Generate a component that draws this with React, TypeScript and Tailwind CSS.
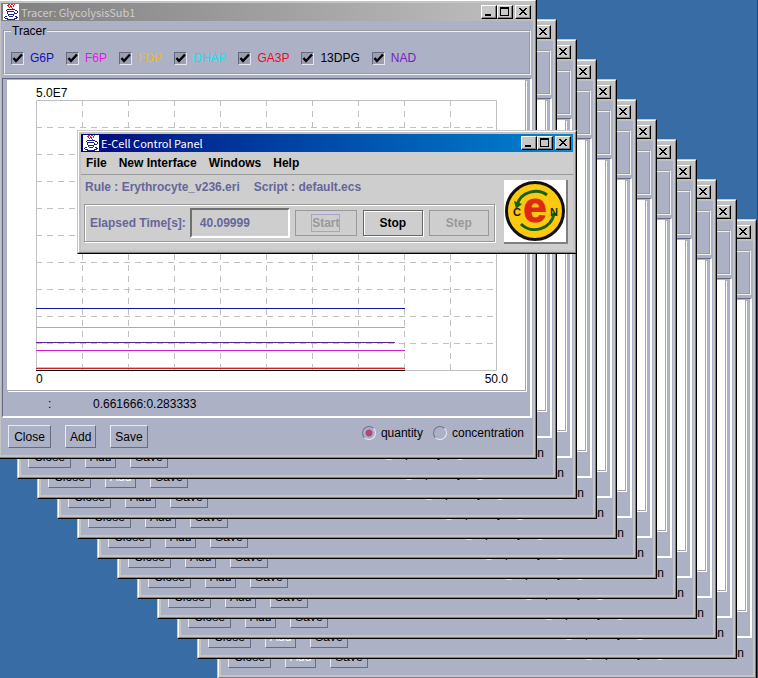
import React from "react";

type Species = { name: string; color: string };

const species: Species[] = [
  { name: "G6P", color: "text-[#1010c0]" },
  { name: "F6P", color: "text-[#f010f0]" },
  { name: "FDP", color: "text-[#f0b818]" },
  { name: "DHAP", color: "text-[#10e4f0]" },
  { name: "GA3P", color: "text-[#e81020]" },
  { name: "13DPG", color: "text-black" },
  { name: "NAD", color: "text-[#7820c0]" },
];

const traces = [
  { y: 208, end: 369, color: "#1414a0" },
  { y: 227, end: 369, color: "#30e0e0" },
  { y: 242, end: 359, color: "#602090" },
  { y: 250, end: 369, color: "#d020d0" },
  { y: 267, end: 369, color: "#ffc800" },
  { y: 268, end: 369, color: "#d02020" },
  { y: 270, end: 369, color: "#000000" },
];

const steps = [1, 2, 3, 4, 5, 6, 7, 8, 9];

function JavaIcon() {
  return (
    <svg className="h-4 w-4 shrink-0 bg-white" viewBox="0 0 16 16" fill="none" shapeRendering="crispEdges" aria-hidden="true">
      <path d="M5 0.5h2M8 0.5h2M11 0.5h1M4 1.5h2M7 1.5h1M10 1.5h1M5 2.5h1M7 2.5h2M10 2.5h1M6 3.5h1M8 3.5h1M9 4.5h1" stroke="#d02030" />
      <path d="M4 5.5h8M3 6.5h1M12 6.5h2M4 7.5h7M14 7.5h1M4 8.5h1M11 8.5h1M14 8.5h1M4 9.5h1M11 9.5h3M5 10.5h6M5 11.5h1M10 11.5h1M2 12.5h2M6 12.5h4M12 12.5h2M1 13.5h1M13 13.5h2M2 14.5h3M11 14.5h3M4 15.5h8" stroke="#202080" />
    </svg>
  );
}

const captionButton =
  "flex h-[14px] w-4 items-center justify-center border border-t-white border-l-white border-r-black border-b-black bg-[#c8c8c8] shadow-[inset_-1px_-1px_0_#808080]";

function TitleBar({ title, active }: { title: string; active?: boolean }) {
  return (
    <div
      className={
        active
          ? "flex h-[18px] items-center bg-linear-to-r from-[#000080] to-[#1084d0] px-[2px] font-normal text-white"
          : "flex h-[18px] items-center bg-linear-to-r from-[#808080] to-[#c0c0c0] px-[2px] font-normal text-[#cccccc]"
      }
    >
      <JavaIcon />
      <span className="ml-[2px] flex-1 font-['Noto_Sans_CJK_JP',sans-serif] text-[11px] leading-[14px] whitespace-nowrap">{title}</span>
      <button className={captionButton} aria-label="Minimize">
        <svg width="12" height="10" shapeRendering="crispEdges"><path d="M2 8h6" stroke="#000" strokeWidth="2" /></svg>
      </button>
      <button className={captionButton} aria-label="Maximize">
        <svg width="12" height="10" shapeRendering="crispEdges"><path d="M1 0h9v9h-9zM2 2v6h7v-6z" fill="#000" fillRule="evenodd" /></svg>
      </button>
      <button className={captionButton + " ml-[2px]"} aria-label="Close window">
        <svg width="12" height="10" shapeRendering="crispEdges">
          <path d="M2 1h2v1h1v1h2v-1h1v-1h2v1h-1v1h-1v1h-1v1h1v1h1v1h1v1h-2v-1h-1v-1h-2v1h-1v1h-2v-1h1v-1h1v-1h1v-1h-1v-1h-1v-1h-1z" fill="#000" />
        </svg>
      </button>
    </div>
  );
}

function Frame({ children, className }: { children: React.ReactNode; className: string }) {
  return (
    <div className="border border-t-[#c8c8c8] border-l-[#c8c8c8] border-r-black border-b-black">
      <div className={"border border-t-white border-l-white border-r-[#808080] border-b-[#808080] bg-[#c4c4c4] p-[2px] " + className}>
        {children}
      </div>
    </div>
  );
}

function SpeciesToggle({ name, color }: Species) {
  return (
    <label className={"flex items-center gap-[6px] " + color}>
      <span className="grid">
        <input
          type="checkbox"
          defaultChecked
          className="col-start-1 row-start-1 h-[13px] w-[13px] appearance-none border border-t-[#666a80] border-l-[#666a80] border-r-[#e4e6f0] border-b-[#e4e6f0] bg-[#9c9fb2]"
        />
        <svg className="pointer-events-none col-start-1 row-start-1" width="13" height="13" viewBox="0 0 13 13" fill="none" aria-hidden="true">
          <path d="M2.5 6L5 9L11 2.5" stroke="#000" strokeWidth="2.4" />
        </svg>
      </span>
      {name}
    </label>
  );
}

function Chart() {
  return (
    <div className="border-r border-b border-[#a8a8a8] bg-white pt-[6px] pr-7 pb-1 pl-[29px] shadow-[1px_1px_0_#fff]">
      <div className="leading-[14px]">5.0E7</div>
      <svg className="block w-full" height="271" viewBox="0 0 461 271" preserveAspectRatio="none" fill="none">
        <g stroke="#c0c0c0">
          <path d="M0.5 0.5H460.5V270.5H0.5Z" />
          {steps.map((n) => (
            <path key={"v" + n} d={`M${n * 46 + 0.5} 0V270`} strokeDasharray="6 5" />
          ))}
          {steps.map((n) => (
            <path key={"h" + n} d={`M0 ${n * 27 + 0.5}H460`} strokeDasharray="6 5" />
          ))}
        </g>
        {traces.map((t) => (
          <rect key={t.y} x="0" y={t.y} width={t.end} height="1" fill={t.color} />
        ))}
      </svg>
      <div className="-mr-[11px] flex justify-between pt-px leading-[14px]">
        <span>0</span>
        <span>50.0</span>
      </div>
    </div>
  );
}

const lavenderButton =
  "h-[23px] border border-t-[#e8eaf4] border-l-[#e8eaf4] border-r-[#686c80] border-b-[#686c80] px-1";

const radioInput =
  "h-[14px] w-[14px] appearance-none rounded-full border border-t-[#707488] border-l-[#707488] border-r-[#e8eaf4] border-b-[#e8eaf4] checked:bg-[radial-gradient(circle,#b04878_3px,transparent_4px)]";

function TracerWindow({ id, addPressed }: { id: number; addPressed: boolean }) {
  return (
    <Frame className="">
      <TitleBar title="Tracer: GlycolysisSub1" />
      <div className="bg-[#adb1c6] px-px pt-[3px]">
        <fieldset className="mx-px border-2 border-[#f0f0f0] px-[6px] pb-2 [border-style:groove]">
          <legend className="px-px leading-[14px]">Tracer</legend>
          <div className="flex gap-3 pt-[13px] leading-[14px]">
            {species.map((s) => (
              <SpeciesToggle key={s.name} {...s} />
            ))}
          </div>
        </fieldset>
        <div className="mt-[3px] border-t border-r-2 border-b-2 border-l border-t-[#666a84] border-r-white border-b-white border-l-[#666a84] pt-px pr-1 pl-1">
          <Chart />
          <div className="flex h-[25px] items-center pl-[41px]">
            <span className="w-[45px]">:</span>
            <span>0.661666:0.283333</span>
          </div>
        </div>
        <div className="flex h-[37px] items-start pt-[7px] pr-2 pl-[6px]">
          <button className={lavenderButton + " w-[43px]"}>Close</button>
          <button className={lavenderButton + " ml-[14px] w-[31px]" + (addPressed ? " text-white" : "")}>Add</button>
          <button className={lavenderButton + " ml-[14px] w-[38px]"}>Save</button>
          <div className="ml-auto flex gap-[10px] pt-px leading-[14px]">
            <label className="flex items-center gap-[5px]">
              <input type="radio" name={"unit" + id} defaultChecked className={radioInput} />
              quantity
            </label>
            <label className="flex items-center gap-[5px]">
              <input type="radio" name={"unit" + id} className={radioInput} />
              concentration
            </label>
          </div>
        </div>
      </div>
    </Frame>
  );
}

function Logo() {
  return (
    <svg className="h-16 w-16 shrink-0 border-r-2 border-b-2 border-[#808080] bg-white" viewBox="0 0 62 62" role="img" aria-label="E-Cell">
      <circle cx="31" cy="31" r="28.5" fill="#fcc810" stroke="#101010" strokeWidth="3" />
      <path d="M43 15C34 8 17 11 13 25" stroke="#186018" strokeWidth="3" fill="none" />
      <path d="M10 21l8 3l-6 5z" fill="#186018" />
      <path d="M17 44C28 55 48 49 50 33" stroke="#186018" strokeWidth="3" fill="none" />
      <text x="31" y="42" textAnchor="middle" fill="#e02818" stroke="#e02818" strokeWidth="1" fontFamily="Liberation Sans, sans-serif" fontSize="42">e</text>
      <text x="9" y="36" fill="#181818" fontFamily="Liberation Sans, sans-serif" fontSize="11">C</text>
      <text x="46" y="36" fill="#103810" fontFamily="Liberation Sans, sans-serif" fontWeight="700" fontSize="11">N</text>
    </svg>
  );
}

const disabledButton = "h-[26px] border border-[#999999] text-[#999999]";

function ControlPanel() {
  return (
    <Frame className="font-bold">
      <TitleBar title="E-Cell Control Panel" active />
      <div className="bg-[#cecece]">
        <nav className="flex h-[23px] items-center gap-[12px] border-b border-[#999999] px-[5px]">
          <button>File</button>
          <button>New Interface</button>
          <button>Windows</button>
          <button>Help</button>
        </nav>
        <div className="flex justify-between pr-[5px] pl-[3px] text-[#666699]">
          <div>
            <div className="flex h-[29px] gap-[14px] px-px pt-[5px] leading-[14px]">
              <span>Rule : Erythrocyte_v236.eri</span>
              <span>Script : default.ecs</span>
            </div>
            <div className="flex h-[38px] items-center border border-[#999999] px-[5px] shadow-[1px_1px_0_#fff,inset_1px_1px_0_#fff]">
              <label htmlFor="elapsed">Elapsed Time[s]:</label>
              <input
                id="elapsed"
                readOnly
                defaultValue="40.09999"
                className="mr-[5px] ml-1 h-[30px] w-[100px] border-2 border-t-[#707070] border-l-[#707070] border-r-white border-b-white pl-2"
              />
              <button disabled className={disabledButton + " w-[62px]"}>
                <span className="border border-[#a4a4cc] py-px">Start</span>
              </button>
              <button className="mx-[6px] h-[26px] w-[60px] border border-[#666666] text-black shadow-[1px_1px_0_#fff,inset_1px_1px_0_#fff]">Stop</button>
              <button disabled className={disabledButton + " w-[60px]"}>Step</button>
            </div>
            <div className="h-[8px]" />
          </div>
          <div className="pt-[5px]">
            <Logo />
          </div>
        </div>
      </div>
    </Frame>
  );
}

const positions = [
  "left-[-3px] top-[-1px]",
  "left-[17px] top-[19px]",
  "left-[37px] top-[39px]",
  "left-[57px] top-[59px]",
  "left-[77px] top-[79px]",
  "left-[97px] top-[99px]",
  "left-[117px] top-[119px]",
  "left-[137px] top-[139px]",
  "left-[157px] top-[159px]",
  "left-[177px] top-[179px]",
  "left-[197px] top-[199px]",
  "left-[217px] top-[219px]",
];

export default function App() {
  return (
    <main className="relative h-screen w-full overflow-hidden border-r border-[#20508c] bg-[#386ca4] font-['Liberation_Sans',Arial,sans-serif] text-[12px] text-black">
      {positions
        .map((position, i) => (
          <section key={position} className={"absolute w-[540px] " + position}>
            <TracerWindow id={i} addPressed={i === 2 || i >= 10} />
          </section>
        ))
        .reverse()}
      <section className="absolute top-[130px] left-[77px] w-[500px]">
        <ControlPanel />
      </section>
    </main>
  );
}
